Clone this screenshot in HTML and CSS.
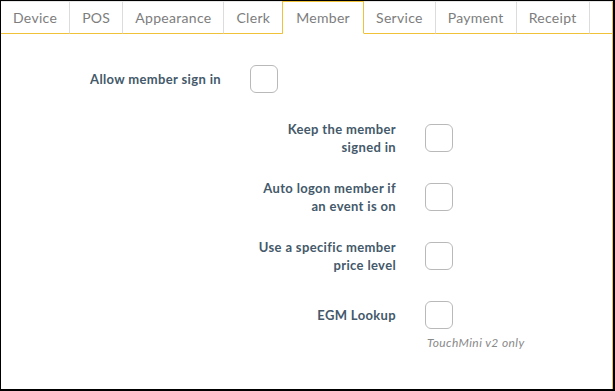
FILE: index.html
```html
<!DOCTYPE html>
<html lang="en">
<head>
    <meta charset="UTF-8">
    <meta name="viewport" content="width=device-width, initial-scale=1.0">
    <title>Settings - Member</title>
    <link rel="stylesheet" href="styles.css">
</head>
<body>
    <div class="frame">
        <nav class="tabs">
            <div class="tab">Device</div>
            <div class="tab">POS</div>
            <div class="tab">Appearance</div>
            <div class="tab">Clerk</div>
            <div class="tab active">Member</div>
            <div class="tab">Service</div>
            <div class="tab">Payment</div>
            <div class="tab">Receipt</div>
            <div class="tab-fill"></div>
        </nav>
        <div class="panel">
            <div class="row">
                <label class="label wide" for="allow">Allow member sign in</label>
                <div class="control"><input type="checkbox" id="allow" class="check"></div>
            </div>
            <div class="sub">
                <div class="row">
                    <label class="label" for="keep">Keep the member<br>signed in</label>
                    <div class="control"><input type="checkbox" id="keep" class="check"></div>
                </div>
                <div class="row">
                    <label class="label" for="auto">Auto logon member if<br>an event is on</label>
                    <div class="control"><input type="checkbox" id="auto" class="check"></div>
                </div>
                <div class="row">
                    <label class="label" for="price">Use a specific member<br>price level</label>
                    <div class="control"><input type="checkbox" id="price" class="check"></div>
                </div>
                <div class="row">
                    <label class="label" for="egm">EGM Lookup</label>
                    <div class="control">
                        <input type="checkbox" id="egm" class="check">
                        <div class="note">TouchMini v2 only</div>
                    </div>
                </div>
            </div>
        </div>
    </div>
</body>
</html>
```

FILE: styles.css
```css
html, body {
    margin: 0;
    padding: 0;
    background: #fff;
}
body {
    font-family: Lato, "Open Sans", Arial, sans-serif;
}
.frame {
    box-sizing: border-box;
    width: 615px;
    height: 391px;
    border-top: 1px solid #000;
    border-left: 1px solid #000;
    border-right: 2px solid #000;
    border-bottom: 2px solid #000;
    display: flex;
    flex-direction: column;
}
.tabs {
    display: flex;
    height: 33px;
    flex: none;
}
.tab {
    box-sizing: border-box;
    padding: 0 12px;
    height: 33px;
    line-height: 32px;
    font-size: 14px;
    letter-spacing: 0.3px;
    color: #7d7d7d;
    border-right: 1px solid #dcdcdc;
    border-bottom: 1px solid #f0c23a;
    border-top: 1px solid #e6e6e6;
}
.tab.active {
    margin-left: -1px;
    border: 1px solid #f0c23a;
    border-bottom: 1px solid transparent;
    padding: 0 13px;
}
.tab-fill {
    flex: 1;
    border-bottom: 1px solid #f0c23a;
    border-right: 1px solid #f0c23a;
    border-top: 1px solid #e6e6e6;
}
.panel {
    flex: 1;
    border-right: 1px solid #f0c23a;
    padding: 31px 0 0 20px;
    display: flex;
    flex-direction: column;
    gap: 31px;
}
.sub {
    display: flex;
    flex-direction: column;
    gap: 31px;
    margin-left: 225px;
}
.row {
    display: flex;
    align-items: center;
    gap: 29px;
    height: 28px;
}
.label {
    width: 150px;
    text-align: right;
    font-size: 13px;
    font-weight: bold;
    letter-spacing: 0.35px;
    line-height: 18px;
    color: #44596a;
}
.label.wide {
    width: 200px;
}
.control {
    height: 28px;
}
.check {
    appearance: none;
    -webkit-appearance: none;
    display: block;
    margin: 0;
    width: 28px;
    height: 28px;
    box-sizing: border-box;
    border: 1px solid #b9b9b9;
    border-radius: 6px;
    background: #fff;
}
.note {
    margin-top: 6px;
    margin-left: 2px;
    white-space: nowrap;
    font-size: 12px;
    font-style: italic;
    letter-spacing: 0.4px;
    color: #8a8a8a;
}
```
